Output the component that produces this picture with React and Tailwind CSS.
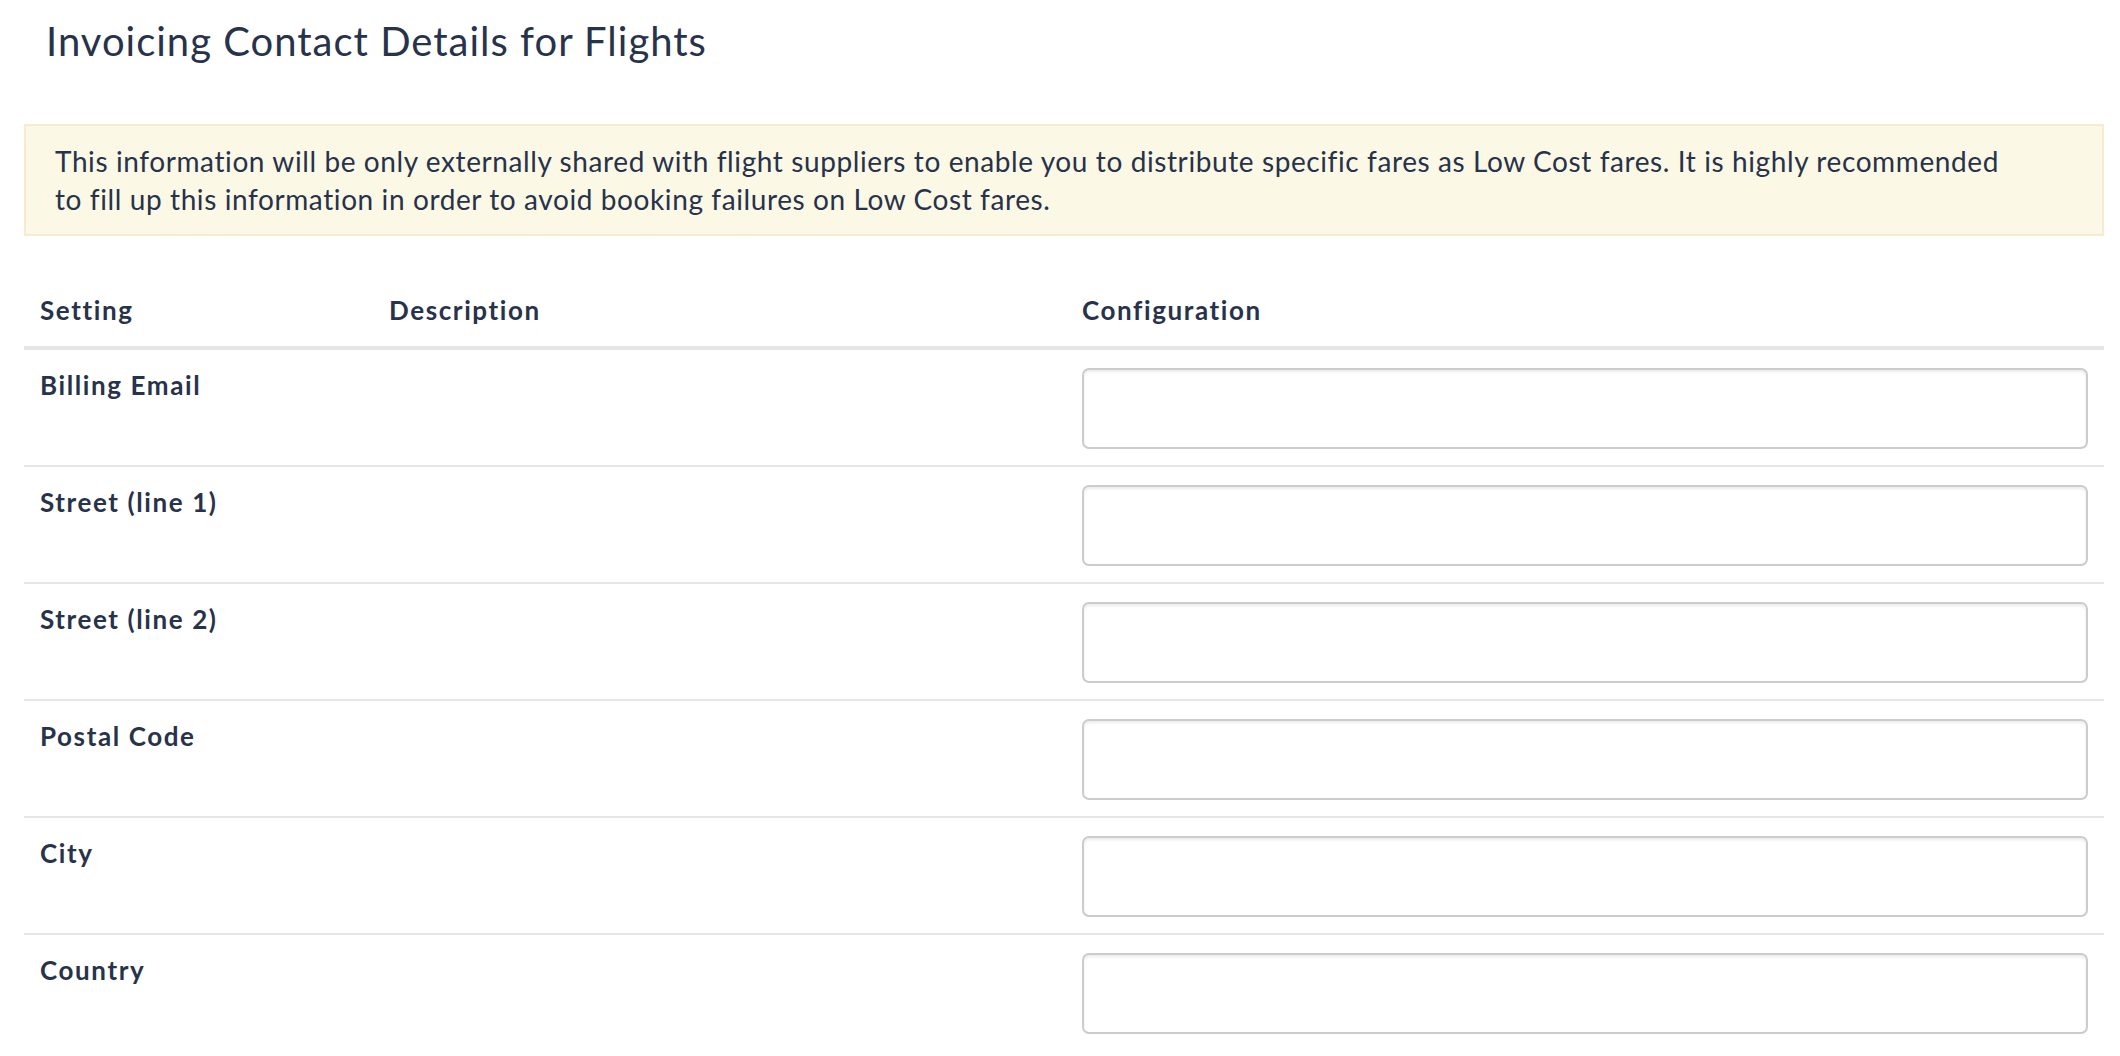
import React from 'react';

const fields = ['Billing Email', 'Street (line 1)', 'Street (line 2)', 'Postal Code', 'City', 'Country'];

export default function App() {
  return (
    <div className="min-h-screen bg-white pl-[24px] pr-[16px] pt-[17px] pb-[24px] text-[#27324b] font-['Lato',sans-serif] [font-variant-ligatures:none]">
      <h1 className="pl-[22px] text-[40px] leading-[48px] font-normal tracking-[1px]">Invoicing Contact Details for Flights</h1>

      {/* Low cost notice */}
      <div className="mt-[59px] border-2 border-[#f8ebcd] bg-[#fcf8e6] px-[29px] py-[16px] text-[28px] leading-[38px] tracking-[0.6px]">
        This information will be only externally shared with flight suppliers to enable you to distribute specific fares as Low Cost fares. It is highly recommended
        <br />
        to fill up this information in order to avoid booking failures on Low Cost fares.
      </div>

      <table className="mt-[38px] w-full border-collapse table-fixed">
        <colgroup>
          <col className="w-[349px]" />
          <col className="w-[693px]" />
          <col />
        </colgroup>
        <thead>
          <tr className="border-b-4 border-[#e5e5e5]">
            <th className="px-[16px] py-[16px] text-left text-[26px] leading-[40px] font-bold tracking-[1.6px]">Setting</th>
            <th className="px-[16px] py-[16px] text-left text-[26px] leading-[40px] font-bold tracking-[1.6px]">Description</th>
            <th className="px-[16px] py-[16px] text-left text-[26px] leading-[40px] font-bold tracking-[1.6px]">Configuration</th>
          </tr>
        </thead>
        <tbody>
          {fields.map((f, i) => (
            <tr key={f} className={i === 0 ? '' : 'border-t-2 border-[#e6e6e6]'}>
              <td className="px-[16px] pt-[15px] pb-[16px] align-top text-[26px] leading-[40px] font-bold tracking-[1.6px]">{f}</td>
              <td className="px-[16px] pt-[18px] pb-[16px] align-top"></td>
              <td className="px-[16px] pt-[18px] pb-[16px] align-top">
                <input
                  type="text"
                  className="block h-[81px] w-full rounded-[7px] border-2 border-[#cccccc] bg-white px-[20px] text-[26px] shadow-[inset_0_2px_3px_rgba(0,0,0,0.08)] outline-none"
                />
              </td>
            </tr>
          ))}
        </tbody>
      </table>
    </div>
  );
}
